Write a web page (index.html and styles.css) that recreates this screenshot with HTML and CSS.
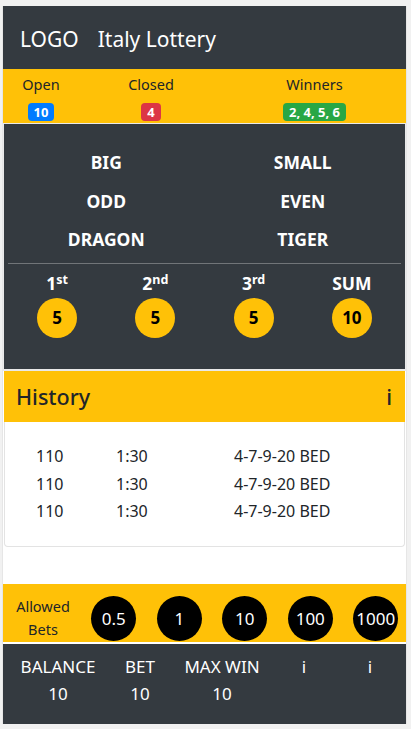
FILE: index.html
```html
<!DOCTYPE html>
<html>
<head>
<meta charset="utf-8">
<link rel="stylesheet" href="styles.css">
</head>
<body>
<div class="app">
  <header class="topbar">
    <span class="logo">LOGO</span>
    <span class="title">Italy Lottery</span>
  </header>

  <section class="status">
    <div class="stat">
      <div class="stat-label">Open</div>
      <span class="badge badge-blue">10</span>
    </div>
    <div class="stat">
      <div class="stat-label">Closed</div>
      <span class="badge badge-red">4</span>
    </div>
    <div class="stat">
      <div class="stat-label">Winners</div>
      <span class="badge badge-green">2, 4, 5, 6</span>
    </div>
  </section>

  <section class="game">
    <div class="options">
      <div class="opt">BIG</div>
      <div class="opt">SMALL</div>
      <div class="opt">ODD</div>
      <div class="opt">EVEN</div>
      <div class="opt">DRAGON</div>
      <div class="opt">TIGER</div>
    </div>
    <hr class="divider">
    <div class="places">
      <div class="place">
        <div class="place-label">1<sup>st</sup></div>
        <div class="ball">5</div>
      </div>
      <div class="place">
        <div class="place-label">2<sup>nd</sup></div>
        <div class="ball">5</div>
      </div>
      <div class="place">
        <div class="place-label">3<sup>rd</sup></div>
        <div class="ball">5</div>
      </div>
      <div class="place">
        <div class="place-label">SUM</div>
        <div class="ball">10</div>
      </div>
    </div>
  </section>

  <section class="history">
    <div class="history-head">
      <span class="history-title">History</span>
      <span class="history-info">i</span>
    </div>
    <div class="history-body">
      <div class="hrow"><span>110</span><span>1:30</span><span>4-7-9-20 BED</span></div>
      <div class="hrow"><span>110</span><span>1:30</span><span>4-7-9-20 BED</span></div>
      <div class="hrow"><span>110</span><span>1:30</span><span>4-7-9-20 BED</span></div>
    </div>
  </section>

  <div class="spacer"></div>

  <section class="bets">
    <div class="bets-label">Allowed<br>Bets</div>
    <div class="chip">0.5</div>
    <div class="chip">1</div>
    <div class="chip">10</div>
    <div class="chip">100</div>
    <div class="chip">1000</div>
  </section>

  <footer class="footer">
    <div class="fcol"><div>BALANCE</div><div>10</div></div>
    <div class="fcol"><div>BET</div><div>10</div></div>
    <div class="fcol"><div>MAX WIN</div><div>10</div></div>
    <div class="fcol"><div>i</div></div>
    <div class="fcol"><div>i</div></div>
  </footer>
</div>
</body>
</html>
```

FILE: styles.css
```css
* { box-sizing: border-box; }

html, body {
  margin: 0;
  padding: 0;
  background: #f1f1f1;
}

body {
  font-family: "Noto Sans", "Open Sans", sans-serif;
  color: #212529;
}

.app {
  margin: 6px 4px 4px 2px;
  width: 405px;
  background: #fff;
  border-left: 1px solid #e6e6e6;
  border-right: 1px solid #e6e6e6;
}

.topbar {
  height: 63px;
  background: #343a40;
  color: #fff;
  display: flex;
  align-items: center;
  gap: 19px;
  padding: 4px 0 0 17px;
  font-size: 21px;
  line-height: 1;
}

.status {
  background: #ffc107;
  height: 54px;
  display: grid;
  grid-template-columns: 76px 144px 1fr;
  padding-top: 5px;
}

.stat {
  display: flex;
  flex-direction: column;
  align-items: center;
  gap: 9px;
}

.stat-label {
  font-size: 14.5px;
  line-height: 20px;
}

.badge {
  display: inline-block;
  color: #fff;
  font-size: 13px;
  font-weight: 700;
  line-height: 18px;
  padding: 0 6px;
  border-radius: 4px;
}

.badge-blue { background: #007bff; }
.badge-red { background: #dc3545; }
.badge-green { background: #28a745; }

.game {
  background: #343a40;
  color: #fff;
  border: 1px solid #e9e9e9;
  border-bottom-width: 2px;
  height: 248px;
  padding: 0 4px;
}

.options {
  display: grid;
  grid-template-columns: 1fr 1fr;
  padding-top: 19px;
}

.opt {
  text-align: center;
  font-weight: 700;
  font-size: 17.5px;
  line-height: 38.5px;
}

.divider {
  border: 0;
  border-top: 1px solid rgba(255,255,255,0.3);
  margin: 4px 0 0 0;
}

.places {
  display: grid;
  grid-template-columns: repeat(4, 1fr);
  padding-top: 7px;
}

.place {
  display: flex;
  flex-direction: column;
  align-items: center;
}

.place-label {
  font-weight: 700;
  font-size: 17.5px;
  line-height: 25px;
}

.place-label sup {
  font-size: 12.5px;
  line-height: 0;
  vertical-align: 6px;
}

.ball {
  width: 40px;
  height: 40px;
  margin-top: 2px;
  border-radius: 50%;
  background: #ffc107;
  color: #000;
  font-weight: 700;
  font-size: 17px;
  display: flex;
  align-items: center;
  justify-content: center;
}

.history {
  margin: 0 1px;
}

.history-head {
  background: #ffc107;
  height: 51px;
  display: flex;
  align-items: center;
  justify-content: space-between;
  padding: 0 13px 0 12px;
  font-size: 21.5px;
  font-weight: 500;
}

.history-body {
  border: 1px solid #e3e3e3;
  border-top: 0;
  border-radius: 0 0 4px 4px;
  height: 125px;
  padding: 21px 0 0 0;
}

.hrow {
  display: grid;
  grid-template-columns: 80px 118px 1fr;
  padding-left: 31px;
  font-size: 16px;
  line-height: 27.5px;
  color: #212529;
}

.spacer {
  height: 37px;
}

.bets {
  background: #ffc107;
  height: 58px;
  display: grid;
  grid-template-columns: 78px repeat(5, 65.5px);
  align-items: center;
  padding: 11px 0 1px 0;
}

.bets-label {
  text-align: center;
  font-size: 14.5px;
  line-height: 23px;
  padding-left: 2px;
}

.chip {
  justify-self: center;
  width: 45px;
  height: 45px;
  border-radius: 50%;
  background: #000;
  color: #fff;
  font-size: 17px;
  display: flex;
  align-items: center;
  justify-content: center;
}

.footer {
  margin-top: 2px;
  background: #343a40;
  color: #fff;
  height: 80px;
  display: grid;
  grid-template-columns: 14px 82px 82px 82px 82px 50px;
  padding-top: 9px;
  font-size: 17px;
  line-height: 27px;
}

.footer::before { content: ""; }

.fcol {
  text-align: center;
}
```
